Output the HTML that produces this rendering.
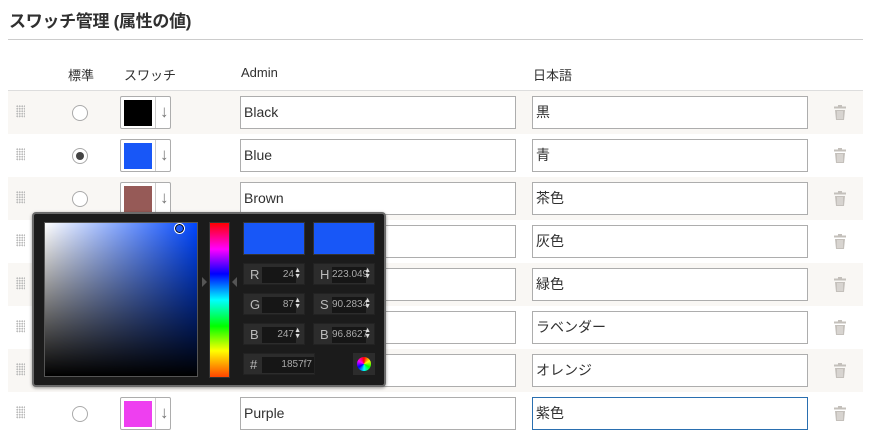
<!DOCTYPE html>
<html><head><meta charset="utf-8"><style>
*{box-sizing:border-box;margin:0;padding:0}
body{width:879px;height:436px;background:#fff;position:relative;overflow:hidden;font-family:"Liberation Sans","Noto Sans CJK JP",sans-serif;color:#303030}
.a{position:absolute}
h1{position:absolute;left:9px;top:7px;font-size:17px;font-weight:bold;color:#303030;letter-spacing:-0.3px}
.hr{position:absolute;left:8px;width:855px;height:1px;background:#ccc}
.th{position:absolute;top:65px;font-size:13px;color:#303030}
.row{position:absolute;left:8px;width:855px;height:43px}
.odd{background:#f9f7f4}
.grip{position:absolute;left:8px;top:14px;width:9px;height:13px;background-image:radial-gradient(circle,#bbb 0.9px,transparent 1.1px);background-size:2.5px 2.5px}
.radio{position:absolute;left:64px;top:14px;width:16px;height:16px;border-radius:50%;border:1px solid #aaa;background:#fff}
.radio.on::after{content:"";position:absolute;left:3px;top:3px;width:8px;height:8px;border-radius:50%;background:#444}
.sw{position:absolute;left:112px;top:5px;width:51px;height:33px;border:1px solid #adadad;border-radius:2px;background:#fff}
.sw i{position:absolute;left:3px;top:3px;width:28px;height:26px}
.sw b{position:absolute;left:34px;top:0;width:1px;height:31px;background:#ccc}
.sw s{position:absolute;left:39px;top:5px;width:8px;height:20px;text-decoration:none;color:#777;font-size:17px;line-height:20px}
.in{position:absolute;top:5px;height:33px;width:276px;border:1px solid #adadad;background:#fff;font-size:14px;padding:0 0 0 3px;line-height:31px;color:#303030}
.ad{left:232px}.jp{left:524px}
.tr{position:absolute;left:826px;top:14px;width:12px;height:15px}
.pk{left:32px;top:212px;width:354px;height:175px;background:#1b1b1b;border:2px solid #6b6b6b;border-radius:4px;box-shadow:0 1px 3px rgba(0,0,0,.4)}
.fb{position:absolute;width:62px;height:22px;background:#2c2c2c;border:1px solid #222;color:#bbb;font-size:13px}
.fb span{position:absolute;left:6px;top:3px}
.fb em{position:absolute;left:18px;top:3px;width:34px;height:16px;background:#161616;font-style:normal;font-size:10px;text-align:right;color:#aaa;padding-right:2px;line-height:16px}
.fb u{position:absolute;right:3px;top:4px;font-size:7px;line-height:6px;text-decoration:none;color:#ddd}
</style></head><body>
<h1>スワッチ管理 (属性の値)</h1>
<div class="hr" style="top:39px"></div>
<div class="th" style="left:68px">標準</div>
<div class="th" style="left:124px">スワッチ</div>
<div class="th" style="left:241px">Admin</div>
<div class="th" style="left:533px">日本語</div>
<div class="hr" style="top:90px;background:#ddd"></div>

<div class="row odd" style="top:91px"><div class="grip"></div><div class="radio"></div><div class="sw"><i style="background:#000"></i><b></b><s>↓</s></div><div class="in ad">Black</div><div class="in jp">黒</div><svg class="tr" viewBox="0 0 12 15"><rect x="0" y="1.5" width="12" height="2" fill="#c4c0bb"/><rect x="4" y="0" width="4" height="2" fill="#c4c0bb"/><path d="M1 5h10l-1 10H2z" fill="#c4c0bb"/><path d="M4 6v8M6 6v8M8 6v8" stroke="#f4f2ef" stroke-width=".8"/></svg></div>
<div class="row" style="top:134px"><div class="grip"></div><div class="radio on"></div><div class="sw"><i style="background:#1857f7"></i><b></b><s>↓</s></div><div class="in ad">Blue</div><div class="in jp">青</div><svg class="tr" viewBox="0 0 12 15"><rect x="0" y="1.5" width="12" height="2" fill="#c4c0bb"/><rect x="4" y="0" width="4" height="2" fill="#c4c0bb"/><path d="M1 5h10l-1 10H2z" fill="#c4c0bb"/><path d="M4 6v8M6 6v8M8 6v8" stroke="#f4f2ef" stroke-width=".8"/></svg></div>
<div class="row odd" style="top:177px"><div class="grip"></div><div class="radio"></div><div class="sw"><i style="background:#965a57"></i><b></b><s>↓</s></div><div class="in ad">Brown</div><div class="in jp">茶色</div><svg class="tr" viewBox="0 0 12 15"><rect x="0" y="1.5" width="12" height="2" fill="#c4c0bb"/><rect x="4" y="0" width="4" height="2" fill="#c4c0bb"/><path d="M1 5h10l-1 10H2z" fill="#c4c0bb"/><path d="M4 6v8M6 6v8M8 6v8" stroke="#f4f2ef" stroke-width=".8"/></svg></div>
<div class="row" style="top:220px"><div class="grip"></div><div class="in ad"></div><div class="in jp">灰色</div><svg class="tr" viewBox="0 0 12 15"><rect x="0" y="1.5" width="12" height="2" fill="#c4c0bb"/><rect x="4" y="0" width="4" height="2" fill="#c4c0bb"/><path d="M1 5h10l-1 10H2z" fill="#c4c0bb"/><path d="M4 6v8M6 6v8M8 6v8" stroke="#f4f2ef" stroke-width=".8"/></svg></div>
<div class="row odd" style="top:263px"><div class="grip"></div><div class="in ad"></div><div class="in jp">緑色</div><svg class="tr" viewBox="0 0 12 15"><rect x="0" y="1.5" width="12" height="2" fill="#c4c0bb"/><rect x="4" y="0" width="4" height="2" fill="#c4c0bb"/><path d="M1 5h10l-1 10H2z" fill="#c4c0bb"/><path d="M4 6v8M6 6v8M8 6v8" stroke="#f4f2ef" stroke-width=".8"/></svg></div>
<div class="row" style="top:306px"><div class="grip"></div><div class="in ad"></div><div class="in jp">ラベンダー</div><svg class="tr" viewBox="0 0 12 15"><rect x="0" y="1.5" width="12" height="2" fill="#c4c0bb"/><rect x="4" y="0" width="4" height="2" fill="#c4c0bb"/><path d="M1 5h10l-1 10H2z" fill="#c4c0bb"/><path d="M4 6v8M6 6v8M8 6v8" stroke="#f4f2ef" stroke-width=".8"/></svg></div>
<div class="row odd" style="top:349px"><div class="grip"></div><div class="in ad"></div><div class="in jp">オレンジ</div><svg class="tr" viewBox="0 0 12 15"><rect x="0" y="1.5" width="12" height="2" fill="#c4c0bb"/><rect x="4" y="0" width="4" height="2" fill="#c4c0bb"/><path d="M1 5h10l-1 10H2z" fill="#c4c0bb"/><path d="M4 6v8M6 6v8M8 6v8" stroke="#f4f2ef" stroke-width=".8"/></svg></div>
<div class="row" style="top:392px"><div class="grip"></div><div class="radio"></div><div class="sw"><i style="background:#ee3ff0"></i><b></b><s>↓</s></div><div class="in ad">Purple</div><div class="in jp" style="border-color:#2a6fb0">紫色</div><svg class="tr" viewBox="0 0 12 15"><rect x="0" y="1.5" width="12" height="2" fill="#c4c0bb"/><rect x="4" y="0" width="4" height="2" fill="#c4c0bb"/><path d="M1 5h10l-1 10H2z" fill="#c4c0bb"/><path d="M4 6v8M6 6v8M8 6v8" stroke="#f4f2ef" stroke-width=".8"/></svg></div>

<div class="a pk">
  <div class="a" style="left:10px;top:8px;width:154px;height:155px;border:1px solid #555;background:linear-gradient(to top,#000,rgba(0,0,0,0)),linear-gradient(to right,#fff,#0046ff)"></div>
  <div class="a" style="left:140px;top:9px;width:11px;height:11px;border:1px solid #fff;border-radius:50%;box-shadow:0 0 0 1px #000 inset"></div>
  <div class="a" style="left:175px;top:8px;width:21px;height:156px;border:1px solid #333;background:linear-gradient(to bottom,#f00 0%,#f0f 17%,#00f 33%,#0ff 50%,#0f0 67%,#ff0 83%,#f40 100%)"></div>
  <div class="a" style="left:168px;top:63px;width:0;height:0;border-top:5px solid transparent;border-bottom:5px solid transparent;border-left:5px solid #555"></div>
  <div class="a" style="left:198px;top:63px;width:0;height:0;border-top:5px solid transparent;border-bottom:5px solid transparent;border-right:5px solid #555"></div>
  <div class="a" style="left:209px;top:8px;width:62px;height:33px;background:#1857f7;border:1px solid #333"></div>
  <div class="a" style="left:279px;top:8px;width:62px;height:33px;background:#1857f7;border:1px solid #333"></div>
  <div class="fb" style="left:209px;top:49px"><span>R</span><em>24</em><u>▲<br>▼</u></div>
  <div class="fb" style="left:209px;top:79px"><span>G</span><em>87</em><u>▲<br>▼</u></div>
  <div class="fb" style="left:209px;top:109px"><span>B</span><em>247</em><u>▲<br>▼</u></div>
  <div class="fb" style="left:209px;top:139px;width:72px"><span>#</span><em style="width:52px">1857f7</em></div>
  <div class="fb" style="left:279px;top:49px"><span>H</span><em>223.049</em><u>▲<br>▼</u></div>
  <div class="fb" style="left:279px;top:79px"><span>S</span><em>90.2834</em><u>▲<br>▼</u></div>
  <div class="fb" style="left:279px;top:109px"><span>B</span><em>96.8627</em><u>▲<br>▼</u></div>
  <div class="a" style="left:319px;top:139px;width:22px;height:22px;background:#2c2c2c"><div class="a" style="left:4px;top:4px;width:14px;height:14px;border-radius:50%;background:conic-gradient(#f00,#ff0,#0f0,#0ff,#00f,#f0f,#f00)"></div></div>
</div>
</body></html>
